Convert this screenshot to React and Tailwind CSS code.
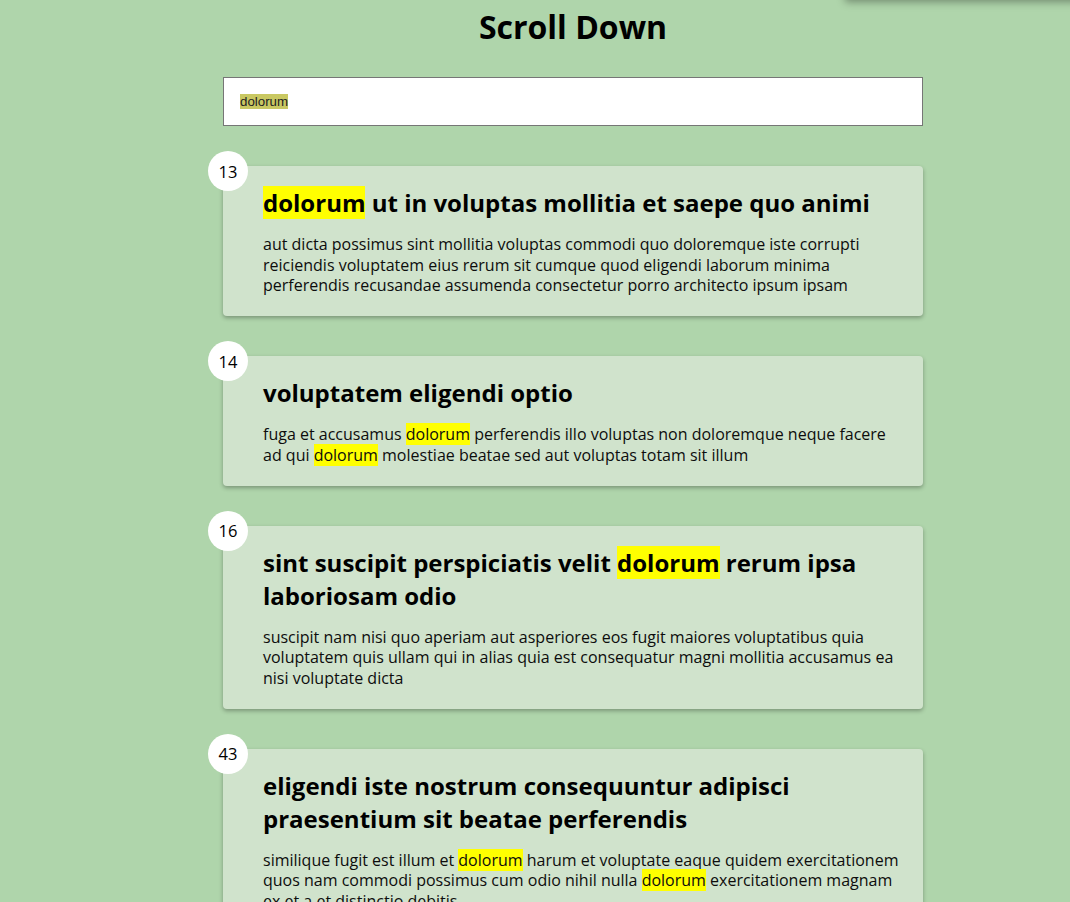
const POSTS = [
  {
    id: 13,
    title: [['dolorum', true], [' ut in voluptas mollitia et saepe quo animi', false]],
    body: [['aut dicta possimus sint mollitia voluptas commodi quo doloremque iste corrupti reiciendis voluptatem eius rerum sit cumque quod eligendi laborum minima perferendis recusandae assumenda consectetur porro architecto ipsum ipsam', false]],
  },
  {
    id: 14,
    title: [['voluptatem eligendi optio', false]],
    body: [
      ['fuga et accusamus ', false],
      ['dolorum', true],
      [' perferendis illo voluptas non doloremque neque facere ad qui ', false],
      ['dolorum', true],
      [' molestiae beatae sed aut voluptas totam sit illum', false],
    ],
  },
  {
    id: 16,
    title: [['sint suscipit perspiciatis velit ', false], ['dolorum', true], [' rerum ipsa laboriosam odio', false]],
    body: [['suscipit nam nisi quo aperiam aut asperiores eos fugit maiores voluptatibus quia voluptatem quis ullam qui in alias quia est consequatur magni mollitia accusamus ea nisi voluptate dicta', false]],
  },
  {
    id: 43,
    title: [['eligendi iste nostrum consequuntur adipisci praesentium sit beatae perferendis', false]],
    body: [
      ['similique fugit est illum et ', false],
      ['dolorum', true],
      [' harum et voluptate eaque quidem exercitationem quos nam commodi possimus cum odio nihil nulla ', false],
      ['dolorum', true],
      [' exercitationem magnam ex et a et distinctio debitis', false],
    ],
  },
];

function Parts({ parts }) {
  return parts.map(([text, hit], i) =>
    hit ? (
      <span key={i} className="bg-[#ffff00]">
        {text}
      </span>
    ) : (
      <span key={i}>{text}</span>
    )
  );
}

function Card({ post }) {
  return (
    <div className="relative bg-[#d0e3cc] rounded-[4px] shadow-[0_2px_4px_rgba(0,0,0,0.3)] pl-10 pr-5 pt-5 pb-[20.5px]">
      <div className="absolute -left-[15px] -top-[15px] w-10 h-10 rounded-full bg-white flex items-center justify-center pt-[2px] text-[16.5px] text-black">
        {post.id}
      </div>
      <h3 className="text-[24px] leading-[33px] font-bold text-black">
        <Parts parts={post.title} />
      </h3>
      <p className="mt-[15px] text-[16px] leading-[20.5px] text-[#0d0d0d]">
        <Parts parts={post.body} />
      </p>
    </div>
  );
}

export default function App() {
  return (
    <div
      className="relative min-h-[902px] h-[902px] overflow-hidden bg-[#afd5ab]"
      style={{ fontFamily: '"Open Sans", sans-serif' }}
    >
      <div className="absolute left-[845px] -top-[50px] w-[300px] h-[50px] bg-[#afd5ab] shadow-[0_2px_8px_rgba(0,0,0,0.35)]" />
      <div className="ml-[223px] w-[700px]">
        <h1 className="pt-[5px] text-[32px] leading-[44px] font-bold text-black text-center">
          Scroll Down
        </h1>
        <div className="mt-[28px] h-[49px] bg-white border border-[#767676] flex items-center pl-4">
          <span
            className="bg-[#c9c862] text-[13.3px] leading-[15px] text-[#222]"
            style={{ fontFamily: '"Liberation Sans", Arial, sans-serif' }}
          >
            dolorum
          </span>
        </div>
        <div className="mt-10 flex flex-col gap-10">
          {POSTS.map((p) => (
            <Card key={p.id} post={p} />
          ))}
        </div>
      </div>
    </div>
  );
}
